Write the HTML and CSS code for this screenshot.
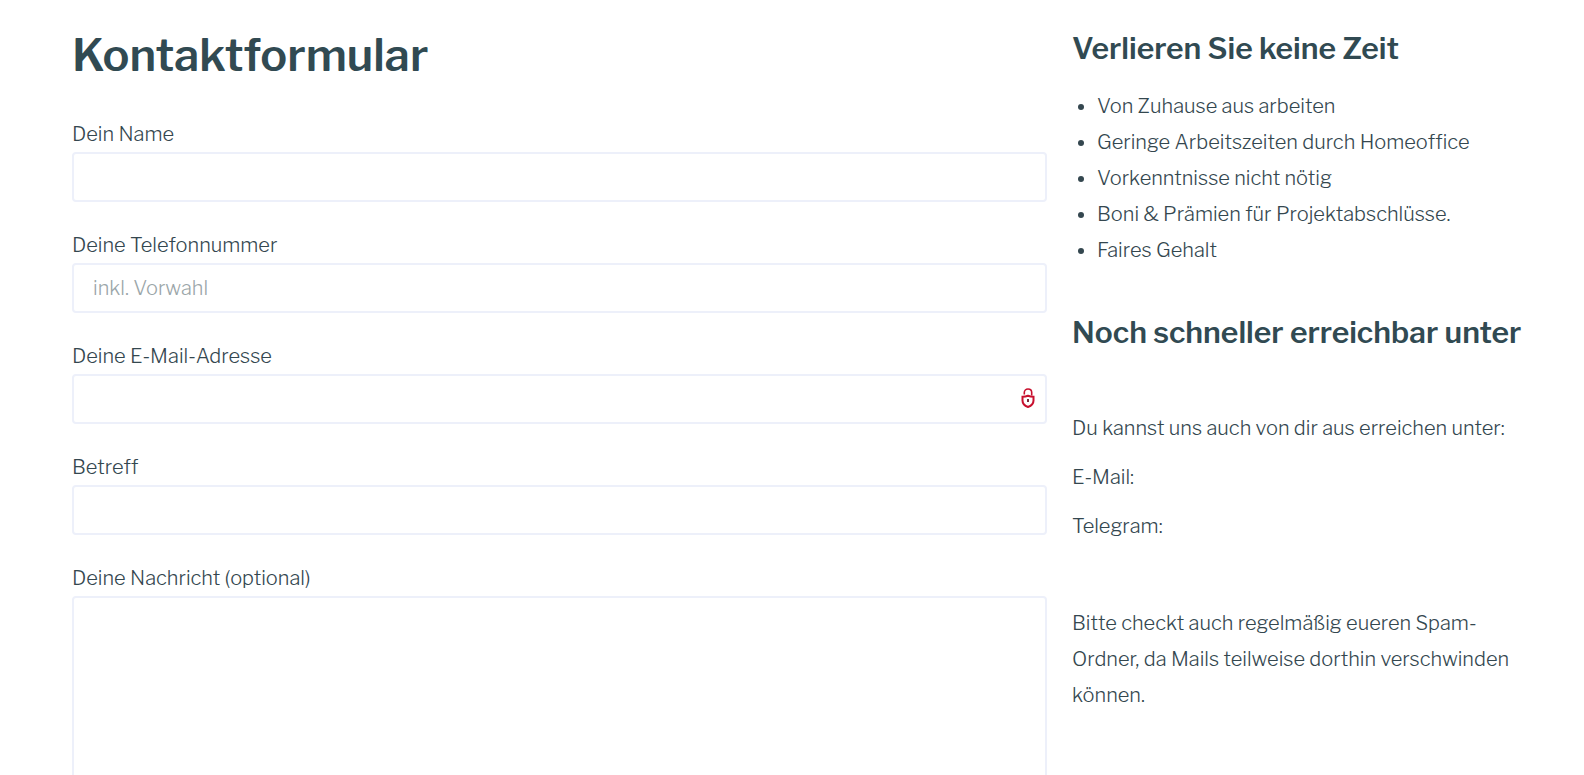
FILE: index.html
```html
<!DOCTYPE html>
<html lang="de">
<head>
    <meta charset="UTF-8">
    <meta name="viewport" content="width=device-width, initial-scale=1.0">
    <title>Kontaktformular</title>
    <link rel="stylesheet" href="styles.css">
</head>
<body>
    <main class="page">
        <section class="contact">
            <h1>Kontaktformular</h1>
            <form class="contact-form">
                <div class="field">
                    <label for="name">Dein Name</label>
                    <input type="text" id="name" name="name" class="input-field">
                </div>
                <div class="field">
                    <label for="phone">Deine Telefonnummer</label>
                    <input type="tel" id="phone" name="phone" class="input-field" placeholder="inkl. Vorwahl">
                </div>
                <div class="field">
                    <label for="email">Deine E-Mail-Adresse</label>
                    <div class="input-wrap">
                        <input type="email" id="email" name="email" class="input-field">
                        <!-- Lock with a shield-shaped body -->
                        <svg class="lock-icon" viewBox="0 0 14 20" width="14" height="20" fill="none" stroke="#c8102e" aria-hidden="true">
                            <path d="M3.300 6.500V4.600C3.300 2.400 4.900 1 7 1s3.700 1.400 3.700 3.600V7.500" stroke-width="1.600"/>
                            <path d="M1.500 8.800C3.800 8.800 5.500 8.400 7 7.800c1.500.6 3.200 1 5.500 1v3.700c0 3.200-2 5.300-5.500 6.500-3.500-1.200-5.500-3.300-5.500-6.500z" stroke-width="2"/>
                            <path d="M7 11v3" stroke="#7d2a3a" stroke-width="2"/>
                        </svg>
                    </div>
                </div>
                <div class="field">
                    <label for="subject">Betreff</label>
                    <input type="text" id="subject" name="subject" class="input-field">
                </div>
                <div class="field">
                    <label for="message">Deine Nachricht (optional)</label>
                    <textarea id="message" name="message" class="input-field" rows="8"></textarea>
                </div>
            </form>
        </section>

        <aside class="info">
            <h2>Verlieren Sie keine Zeit</h2>
            <ul class="benefits">
                <li>Von Zuhause aus arbeiten</li>
                <li>Geringe Arbeitszeiten durch Homeoffice</li>
                <li>Vorkenntnisse nicht nötig</li>
                <li>Boni &amp; Prämien für Projektabschlüsse.</li>
                <li>Faires Gehalt</li>
            </ul>
            <h2>Noch schneller erreichbar unter</h2>
            <div class="reach">
                <p>Du kannst uns auch von dir aus erreichen unter:</p>
                <p>E-Mail:</p>
                <p>Telegram:</p>
            </div>
            <p>Bitte checkt auch regelmäßig eueren Spam-Ordner, da Mails teilweise dorthin verschwinden können.</p>
        </aside>
    </main>
</body>
</html>
```

FILE: styles.css
```css
* {
    box-sizing: border-box;
}

body {
    margin: 0;
    background-color: #fff;
    color: #34474f;
    font-family: "Libre Franklin", "Open Sans", sans-serif;
    font-size: 20px;
    font-weight: 300;
    line-height: 36px;
}

.page {
    display: grid;
    grid-template-columns: 13fr 6fr;
    gap: 25px;
    padding: 24px 62px 24px 72px;
}

h1,
h2 {
    margin: 0;
    color: #314a52;
    font-weight: 600;
}

h1 {
    margin-bottom: 30px;
    font-size: 45px;
    line-height: 62px;
}

h2 {
    margin-bottom: 15px;
    font-size: 30px;
    line-height: 49px;
    white-space: nowrap;
}

/* Form */
.field {
    margin-bottom: 25px;
}

.field label {
    display: block;
}

.input-field {
    display: block;
    width: 100%;
    height: 50px;
    padding: 0 19px;
    border: 2px solid #edf0fa;
    border-radius: 4px;
    background-color: #fff;
    color: inherit;
    font: inherit;
}

.input-field::placeholder {
    color: #9ba6a9;
    opacity: 1;
}

textarea.input-field {
    height: auto;
    padding: 12px 19px;
    resize: none;
}

.input-wrap {
    position: relative;
}

.lock-icon {
    position: absolute;
    top: 14px;
    right: 12px;
}

/* Sidebar */
.benefits {
    margin: 0 0 40px;
    padding-left: 25px;
}

.info p {
    margin: 0 0 13px;
}

.reach {
    padding: 38px 0 48px;
}
```
